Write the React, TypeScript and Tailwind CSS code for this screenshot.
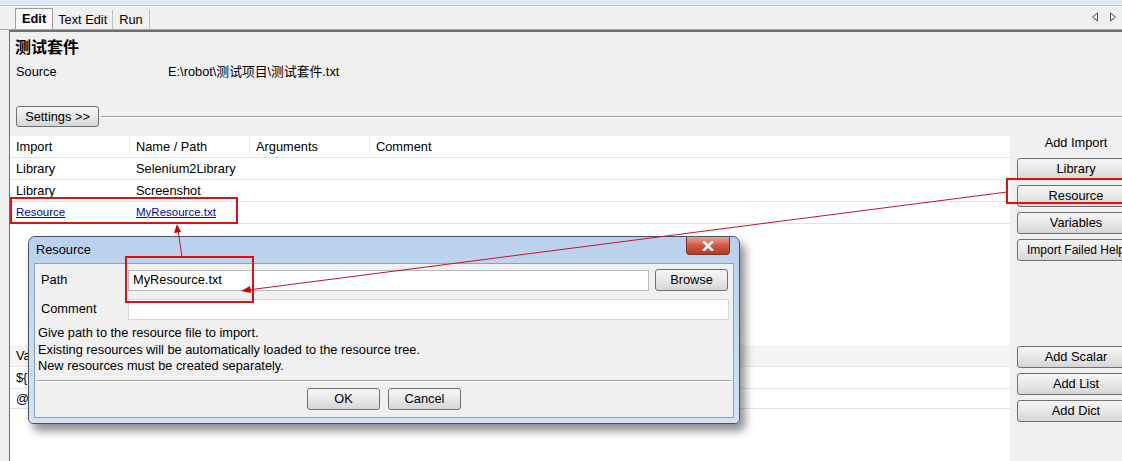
const btn =
  "flex items-center justify-center rounded-[3px] border border-[#707070] bg-gradient-to-b from-[#f6f6f6] via-[#e8e8e8] to-[#d6d6d6] text-black";

function TabArrows() {
  return (
    <div className="ml-auto flex items-center gap-[10px] pb-[7px] pr-[5px]">
      <svg width="8" height="10" viewBox="0 0 8 10">
        <path d="M6.5 1 L1.5 5 L6.5 9 Z" fill="none" stroke="#4a4a4a" strokeWidth="1" />
      </svg>
      <svg width="8" height="10" viewBox="0 0 8 10">
        <path d="M1.5 1 L6.5 5 L1.5 9 Z" fill="none" stroke="#4a4a4a" strokeWidth="1" />
      </svg>
    </div>
  );
}

function ImportRow({ kind, name, link }: { kind: string; name: string; link?: boolean }) {
  const cls = link ? "text-[#0000cc] underline text-[11.5px]" : "";
  return (
    <div className="grid h-[22px] grid-cols-[120px_120px_120px_1fr] items-center border-b border-[#e3e3e3]">
      <div className={"pl-[6px] " + cls}>{kind}</div>
      <div className={"pl-[6px] " + cls}>{name}</div>
      <div />
      <div />
    </div>
  );
}

function ResourceDialog() {
  return (
    <div className="absolute left-[28px] top-[236px] h-[188px] w-[712px] rounded-t-[7px] rounded-b-[5px] border border-[#44556b] bg-gradient-to-b from-[#b9d1ec] to-[#d3e3f4] shadow-[5px_7px_10px_rgba(0,0,0,0.45)]">
      <div className="flex h-[26px] items-center pl-[7px]">Resource</div>
      <div className="absolute right-[9px] top-0 flex h-[18px] w-[44px] items-center justify-center rounded-b-[4px] border border-t-0 border-[#8b2f22] bg-gradient-to-b from-[#e7a293] via-[#cf5a44] to-[#b8361f]">
        <svg width="12" height="10" viewBox="0 0 12 10">
          <path d="M2 1 L10 9 M10 1 L2 9" stroke="#ffffff" strokeWidth="2.6" strokeLinecap="square" />
        </svg>
      </div>
      <div className="mx-[5px] flex h-[155px] flex-col border border-[#8ea1ba] bg-[#f0f0f0]">
        <div className="mt-[5px] flex h-[22px] items-center">
          <div className="w-[93px] pl-[6px]">Path</div>
          <div className="flex h-[21px] w-[521px] items-center border border-[#b5b9c2] bg-white pl-[4px]">
            MyResource.txt
          </div>
          <div className={btn + " ml-[6px] h-[22px] w-[73px]"}>Browse</div>
        </div>
        <div className="mt-[7px] flex h-[22px] items-center">
          <div className="w-[93px] pl-[6px]">Comment</div>
          <div className="h-[21px] w-[601px] border border-[#d5d7dc] bg-white" />
        </div>
        <div className="mt-[5px] pl-[3px] leading-[16.5px]">
          <div>Give path to the resource file to import.</div>
          <div>Existing resources will be automatically loaded to the resource tree.</div>
          <div>New resources must be created separately.</div>
        </div>
        <div className="mx-[2px] mt-[5px] h-[2px] border-t border-b border-t-[#a0a0a0] border-b-white" />
        <div className="mt-[6px] flex justify-center gap-[8px]">
          <div className={btn + " h-[22px] w-[73px]"}>OK</div>
          <div className={btn + " h-[22px] w-[73px]"}>Cancel</div>
        </div>
      </div>
    </div>
  );
}

function Annotations() {
  return (
    <svg className="pointer-events-none absolute left-0 top-0" width="1122" height="461" viewBox="0 0 1122 461">
      <g fill="none" stroke="#e01010" strokeWidth="2">
        <rect x="11" y="198" width="226" height="25" />
        <rect x="126" y="257" width="127" height="45" />
        <rect x="1007" y="179" width="118" height="24" />
      </g>
      <g stroke="#c8102e" strokeWidth="1">
        <line x1="182" y1="257" x2="178" y2="230" />
        <line x1="1007" y1="192" x2="248" y2="290" />
      </g>
      <g fill="#d40000">
        <path d="M177 224 L174 233 L181 232 Z" />
        <path d="M241 291 L250 286 L251 293 Z" />
      </g>
    </svg>
  );
}

export default function App() {
  return (
    <div className="relative flex h-[461px] w-[1122px] flex-col overflow-hidden bg-[#f0f0f0] font-['Liberation_Sans','Noto_Sans_CJK_SC',sans-serif] text-[12.8px] text-black">
      <div className="h-[6px] border-b border-[#b6c5e0] bg-[#dfe8f6]" />

      {/* Tabs */}
      <div className="flex h-[24px] items-end border-b border-[#a8a8a8] pl-[15px]">
        <div className="flex h-[21px] items-center border border-b-0 border-[#9a9a9a] bg-[#f7f7f7] px-[6px] font-bold">Edit</div>
        <div className="flex h-[19px] items-center border-r border-[#c0c0c0] px-[5px]">Text Edit</div>
        <div className="flex h-[19px] items-center border-r border-[#c0c0c0] px-[6px]">Run</div>
        <TabArrows />
      </div>

      <div className="ml-[9px] flex flex-1 flex-col border-l border-t-2 border-[#6e6e6e]">
        <div className="pl-[5px] pt-[6px] text-[16px] font-bold leading-[20px]">测试套件</div>
        <div className="mt-[6px] flex h-[16px] items-center pl-[6px]">
          <div className="w-[152px]">Source</div>
          <div>{"E:\\robot\\测试项目\\测试套件.txt"}</div>
        </div>

        <div className="mt-[26px] flex items-center">
          <div className={btn + " ml-[6px] h-[21px] w-[83px]"}>{"Settings >>"}</div>
          <div className="ml-[2px] h-[2px] flex-1 border-t border-b border-t-[#a0a0a0] border-b-white" />
        </div>

        <div className="mt-[9px] flex flex-1">
          {/* tables */}
          <div className="flex flex-1 flex-col bg-white">
            <div className="h-[209px]">
              <div className="grid h-[22px] grid-cols-[120px_120px_120px_1fr] items-center border-b border-[#e3e3e3]">
                <div className="h-full border-r border-[#ececec] pl-[6px] leading-[22px]">Import</div>
                <div className="h-full border-r border-[#ececec] pl-[6px] leading-[22px]">Name / Path</div>
                <div className="h-full border-r border-[#ececec] pl-[6px] leading-[22px]">Arguments</div>
                <div className="h-full pl-[6px] leading-[22px]">Comment</div>
              </div>
              <ImportRow kind="Library" name="Selenium2Library" />
              <ImportRow kind="Library" name="Screenshot" />
              <ImportRow kind="Resource" name="MyResource.txt" link />
            </div>
            {/* variables table, mostly hidden behind the dialog */}
            <div className="flex h-[22px] items-center border-b border-[#e3e3e3] bg-[#f5f5f5] pl-[6px]">
              <div className="w-[12px] overflow-hidden whitespace-nowrap">Variable</div>
            </div>
            <div className="flex h-[22px] items-center border-b border-[#e3e3e3] pl-[6px]">
              <div className="w-[12px] overflow-hidden whitespace-nowrap">{"${browser}"}</div>
            </div>
            <div className="flex h-[20px] items-center border-b border-[#e3e3e3] pl-[6px]">
              <div className="w-[12px] overflow-hidden whitespace-nowrap">{"@{list}"}</div>
            </div>
          </div>

          {/* side buttons */}
          <div className="w-[112px] pl-[7px]">
            <div className="w-[118px]">
              <div className="h-[22px] text-center leading-[14px]">Add Import</div>
              <div className="flex flex-col gap-[5px]">
                <div className={btn + " h-[22px]"}>Library</div>
                <div className={btn + " h-[22px]"}>Resource</div>
                <div className={btn + " h-[22px]"}>Variables</div>
                <div className={btn + " h-[22px] whitespace-nowrap text-[12px]"}>Import Failed Help</div>
              </div>
              <div className="mt-[85px] flex flex-col gap-[5px]">
                <div className={btn + " h-[22px]"}>Add Scalar</div>
                <div className={btn + " h-[22px]"}>Add List</div>
                <div className={btn + " h-[22px]"}>Add Dict</div>
              </div>
            </div>
          </div>
        </div>
      </div>

      <ResourceDialog />
      <Annotations />
    </div>
  );
}
